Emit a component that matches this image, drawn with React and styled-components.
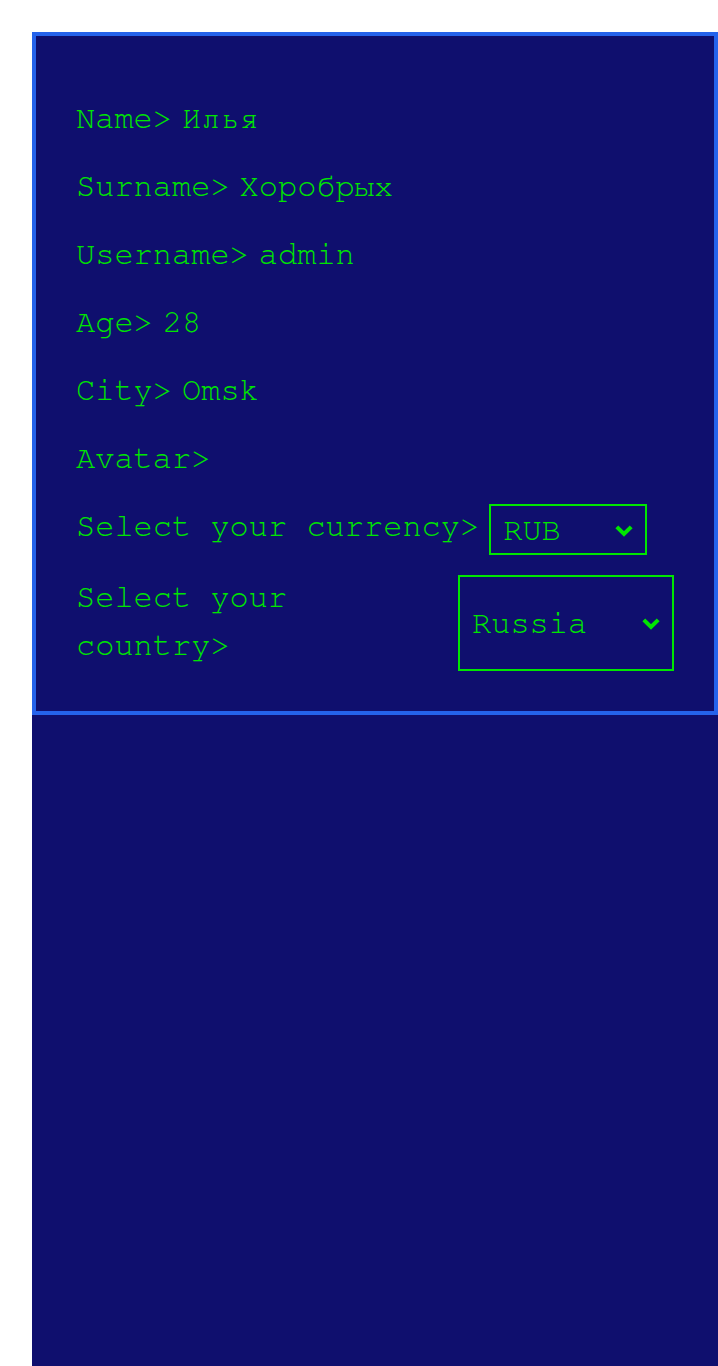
import styled, { createGlobalStyle } from "styled-components";

const mono = `FreeMono, "Liberation Mono", "Courier New", monospace`;

const GlobalStyle = createGlobalStyle`
  body {
    margin: 0;
    background: #ffffff;
    font-family: ${mono};
  }
`;

const Page = styled.div`
  margin: 32px 0 0 32px;
  min-height: calc(100vh - 32px);
  background: #0f0f6e;
`;

const Profile = styled.form`
  display: flex;
  flex-direction: column;
  gap: 20px;
  padding: 60px 40px 40px;
  border: 4px solid #2563eb;
`;

const Field = styled.div`
  display: flex;
  gap: 10px;
  font-size: 32px;
  line-height: 48px;
  color: #00e600;
`;

// FreeMono sits a little low in its line box, lift it by 2px
const Label = styled.span`
  margin: -2px 0 2px;
`;

const Value = styled.span`
  margin: -2px 0 2px;
`;

const SelectBox = styled.div`
  position: relative;
  flex-shrink: 0;
  display: flex;
  border: 2px solid #00e600;
`;

const Select = styled.select`
  appearance: none;
  -webkit-appearance: none;
  min-height: 47px;
  margin: 0;
  padding: 0 84px 0 12px;
  border: none;
  outline: none;
  background: transparent;
  color: #00e600;
  font-family: ${mono};
  font-size: 32px;
`;

const Chevron = styled.svg`
  position: absolute;
  right: 12px;
  top: 50%;
  width: 18px;
  height: 13px;
  margin-top: -6px;
  pointer-events: none;
`;

function Dropdown({ options }) {
  return (
    <SelectBox>
      <Select defaultValue={options[0]}>
        {options.map((o) => (
          <option key={o} value={o}>
            {o}
          </option>
        ))}
      </Select>
      <Chevron viewBox="0 0 18 13">
        <polyline
          points="1.8,2.8 9,10 16.2,2.8"
          fill="none"
          stroke="#00e600"
          strokeWidth="4"
        />
      </Chevron>
    </SelectBox>
  );
}

const user = [
  ["Name>", "Илья"],
  ["Surname>", "Хоробрых"],
  ["Username>", "admin"],
  ["Age>", "28"],
  ["City>", "Omsk"],
  ["Avatar>", ""],
];

export default function App() {
  return (
    <>
      <GlobalStyle />
      <Page>
        <Profile onSubmit={(e) => e.preventDefault()}>
          {user.map(([label, value]) => (
            <Field key={label}>
              <Label>{label}</Label>
              {value && <Value>{value}</Value>}
            </Field>
          ))}
          <Field>
            <Label>Select your currency&gt;</Label>
            <Dropdown options={["RUB", "USD", "EUR"]} />
          </Field>
          <Field>
            <Label>Select your country&gt;</Label>
            <Dropdown options={["Russia", "Serbia", "Latvia"]} />
          </Field>
        </Profile>
      </Page>
    </>
  );
}
